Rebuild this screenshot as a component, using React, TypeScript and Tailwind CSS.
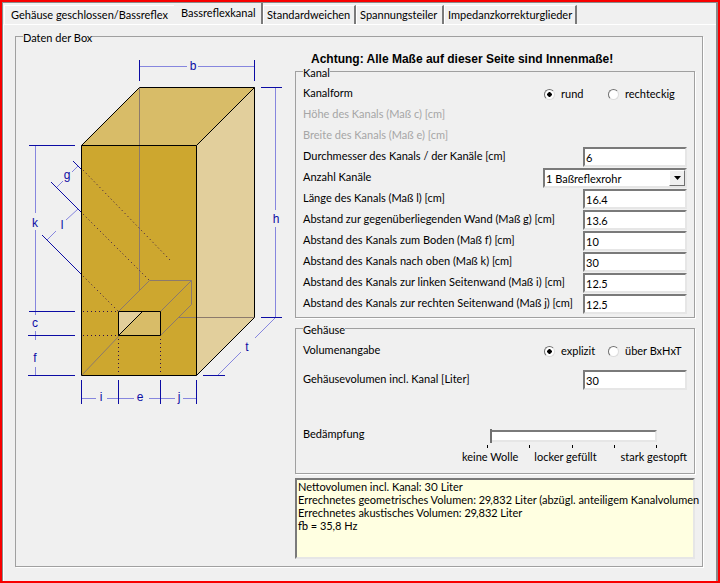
import type { ReactNode } from "react";

const sunken =
  "border-2 border-t-[#7a7a7a] border-l-[#7a7a7a] border-r-[#e6e6e6] border-b-[#e6e6e6]";

function GroupBox({ title, className, children }: { title: string; className: string; children: ReactNode }) {
  return (
    <fieldset
      className={`min-w-0 border border-[#a0a0a0] px-[7px] shadow-[1px_1px_0_#ffffff] ${className}`}
    >
      <legend className="h-[13px] pt-px leading-[14px]">{title}</legend>
      {children}
    </fieldset>
  );
}

function Radio({ name, label, checked }: { name: string; label: string; checked?: boolean }) {
  return (
    <label className="flex h-[20px] w-[64px] shrink-0 items-center gap-[6px] whitespace-nowrap">
      <input
        type="radio"
        name={name}
        defaultChecked={checked}
        className="size-[11px] shrink-0 appearance-none rounded-full border border-t-[#707070] border-l-[#707070] border-r-[#dcdcdc] border-b-[#dcdcdc] bg-white checked:bg-[radial-gradient(circle,#000_2px,#fff_2.5px)]"
      />
      {label}
    </label>
  );
}

function Field({ id, label, value }: { id: string; label: string; value: string }) {
  return (
    <div className="flex h-[21px] justify-between">
      <label htmlFor={id} className="h-[18px] whitespace-nowrap leading-[18px]">
        {label}
      </label>
      <input
        id={id}
        defaultValue={value}
        className={`h-[20px] w-[104px] shrink-0 bg-white px-px ${sunken}`}
      />
    </div>
  );
}

function RadioRow({ title, name, options }: { title: string; name: string; options: string[] }) {
  return (
    <div role="radiogroup" aria-label={title} className="flex h-[21px] justify-between leading-[18px]">
      <span>{title}</span>
      <div className="flex w-[143px] shrink-0">
        <Radio name={name} label={options[0]} checked />
        <Radio name={name} label={options[1]} />
      </div>
    </div>
  );
}

const thin = "M139 66.5H187M198 66.5H254M275.5 88V210M275.5 227V317M35.5 146V213M35.5 230V315M35.5 331V340M35.5 367V375M57 187L63 181M72 172L78 166M47 240L56 231M66 220L78 209M82 398.5H96M107 398.5H134M149 398.5H175M183 398.5H196M218 375L241 352M255 338L275 318";
const ticks = "M139.5 60V81M254.5 60V81M261 87.5H282M261 317.5H282M29 145.5H75M29 311.5H75M28 335.5H75M28 375.5H75M73 161L81 169M51 182L81 212M42 235L81 274M81.5 380V404M118.5 380V404M160.5 380V404M196.5 380V404M203 375.5H225";
const hidden = "M139.5 88V290M82 375L119 336M178 317.5H254M118.5 311.5L149.5 280.5H191.5V304.5L160.5 335.5M160.5 311.5L191.5 280.5";
const marks: [string, number, number][] = [
  ["b", 193, 70],
  ["h", 276, 223],
  ["g", 67, 179],
  ["k", 35, 227],
  ["l", 62, 229],
  ["c", 35, 327],
  ["f", 35, 362],
  ["i", 101, 401],
  ["e", 140, 401],
  ["j", 179, 401],
  ["t", 247, 351],
];

function BoxDrawing() {
  return (
    <svg viewBox="23 50 267 360" className="h-[360px] w-[267px]" role="img" aria-label="Daten der Box">
      <path d="M81 145.5L139.5 87.5H254.5L196.5 145.5Z" fill="#d8bc68" />
      <path d="M196.5 145.5L254.5 87.5V317.5L196.5 375.5Z" fill="#e2cf9c" />
      <path d="M81.5 145.5H196.5V375.5H81.5Z" fill="#cda72f" />
      <path d={hidden} fill="none" stroke="#8c7a6c" />
      <path d="M118.5 311.5H160.5V335.5H118.5Z" fill="#d8bc68" />
      <path d="M118.5 311.5H142.5L118.5 335.5Z" fill="#e2cf9c" />
      <g fill="none" stroke="#000">
        <path d="M118.5 311.5H160.5V335.5H118.5ZM118.5 335.5L142.5 311.5" />
        <path d="M81.5 145.5H196.5V375.5H81.5ZM81.5 145.5L139.5 87.5H254.5V317.5L196.5 375.5M196.5 145.5L254.5 87.5" />
      </g>
      <path
        d="M83 170L170 260M83 214L149 280M83 276L118 311M83 311.5H118M83 335.5H118M118.5 339V375M160.5 339V375"
        fill="none"
        stroke="#30104a"
        strokeDasharray="1 3"
      />
      <path d={thin} fill="none" stroke="#8686de" />
      <path d={ticks} fill="none" stroke="#0c0ca4" />
      <g
        fill="#0c0ca4"
        fontSize="12"
        textAnchor="middle"
        className="font-['Liberation_Sans',Arial,sans-serif]"
      >
        {marks.map(([t, x, y]) => (
          <text key={t} x={x} y={y}>
            {t}
          </text>
        ))}
      </g>
    </svg>
  );
}

const idleTab =
  "h-[19px] self-end whitespace-nowrap border-t border-l border-t-white border-l-white pb-px text-left";

export default function App() {
  return (
    <div className="flex min-h-screen flex-col border-2 border-[#f80000] bg-[#f0f0f0] font-[Lato,'Liberation_Sans',Arial,sans-serif] text-[11px] leading-[13px] text-black">
      <div className="flex grow flex-col border-t border-r-2 border-l border-[#8a8a8a]">
        <div role="tablist" className="flex h-[21px] items-end pl-px">
          <button role="tab" className={`${idleTab} min-w-[170px] px-[6px]`}>Gehäuse geschlossen/Bassreflex</button>
          <button
            role="tab"
            aria-selected="true"
            className="h-[21px] min-w-[89px] whitespace-nowrap border-r-2 border-[#7a7a7a] pl-[7px] pb-[3px] text-left"
          >
            Bassreflexkanal
          </button>
          <button role="tab" className={`${idleTab} min-w-[93px] border-r-2 border-r-[#7a7a7a] px-[3px]`}>Standardweichen</button>
          <button role="tab" className={`${idleTab} min-w-[88px] border-r-2 border-r-[#7a7a7a] px-[3px]`}>Spannungsteiler</button>
          <button role="tab" className={`${idleTab} min-w-[130px] border-r-2 border-r-[#7a7a7a] px-[3px]`}>Impedanzkorrekturglieder</button>
        </div>
        <main className="flex grow flex-col border-t border-l border-white pt-[5px] pr-[13px] pb-[14px] pl-[11px]">
          <GroupBox title="Daten der Box" className="grow">
            <div className="flex pt-[7px]">
              <div className="w-[272px] shrink-0">
                <BoxDrawing />
              </div>
              <div className="flex min-w-0 flex-1 flex-col">
                <h1 className="h-[15px] whitespace-nowrap pt-[2px] pl-4 font-['Liberation_Sans',Arial,sans-serif] text-[12px] leading-[15px] font-bold">
                  Achtung: Alle Maße auf dieser Seite sind Innenmaße!
                </h1>
                <GroupBox title="Kanal" className="pb-[2px]">
                  <div className="pt-[6px]">
                    <RadioRow title="Kanalform" name="kanalform" options={["rund", "rechteckig"]} />
                    <p className="h-[21px] leading-[18px] text-[#a6a6a6]">Höhe des Kanals (Maß c) [cm]</p>
                    <p className="h-[21px] leading-[18px] text-[#a6a6a6]">Breite des Kanals (Maß e) [cm]</p>
                    <Field id="durchmesser" label="Durchmesser des Kanals / der Kanäle [cm]" value="6" />
                    <div className="flex h-[21px] justify-between">
                      <label htmlFor="anzahl" className="leading-[18px]">Anzahl Kanäle</label>
                      <div className={`flex h-[20px] w-[144px] shrink-0 bg-white ${sunken}`}>
                        <select id="anzahl" className="min-w-0 grow appearance-none pl-px">
                          <option>1 Baßreflexrohr</option>
                        </select>
                        <span className="pointer-events-none flex w-[16px] items-center justify-center border border-t-white border-l-white border-r-[#707070] border-b-[#707070] bg-[#f0f0f0]">
                          <svg viewBox="0 0 7 4" className="h-1 w-[7px]">
                            <path d="M0 0H7L3.5 4Z" />
                          </svg>
                        </span>
                      </div>
                    </div>
                    <Field id="laenge" label="Länge des Kanals (Maß l) [cm]" value="16.4" />
                    <Field id="wand" label="Abstand zur gegenüberliegenden Wand (Maß g) [cm]" value="13.6" />
                    <Field id="boden" label="Abstand des Kanals zum Boden (Maß f) [cm]" value="10" />
                    <Field id="oben" label="Abstand des Kanals nach oben (Maß k) [cm]" value="30" />
                    <Field id="links" label="Abstand des Kanals zur linken Seitenwand (Maß i) [cm]" value="12.5" />
                    <Field id="rechts" label="Abstand des Kanals zur rechten Seitenwand (Maß j) [cm]" value="12.5" />
                  </div>
                </GroupBox>
                <GroupBox title="Gehäuse" className="mt-[4px] pb-[10px]">
                  <div className="flex flex-col gap-[8px] pt-[6px]">
                    <RadioRow title="Volumenangabe" name="volumen" options={["explizit", "über BxHxT"]} />
                    <Field id="liter" label="Gehäusevolumen incl. Kanal [Liter]" value="30" />
                  </div>
                  <div className="mt-[36px] flex justify-between">
                    <label htmlFor="daempfung" className="leading-[13px]">Bedämpfung</label>
                    <div className="w-[225px] shrink-0 pt-[3px]">
                      <div className="pr-[30px] pl-[25px]">
                        <input
                          id="daempfung"
                          type="range"
                          min="0"
                          max="4"
                          defaultValue="0"
                          className={`block h-[12px] w-full appearance-none bg-white ${sunken} [&::-webkit-slider-thumb]:-ml-[3px] [&::-webkit-slider-thumb]:h-[14px] [&::-webkit-slider-thumb]:w-[6px] [&::-webkit-slider-thumb]:appearance-none [&::-webkit-slider-thumb]:border-0 [&::-webkit-slider-thumb]:border-r-2 [&::-webkit-slider-thumb]:border-solid [&::-webkit-slider-thumb]:border-[#707070] [&::-webkit-slider-thumb]:bg-[#f0f0f0]`}
                        />
                        <div className="mt-[3px] flex justify-between">
                          {[0, 1, 2, 3, 4].map((n) => (
                            <span key={n} className="h-[3px] w-px bg-black" />
                          ))}
                        </div>
                      </div>
                      <div className="mt-[2px] flex whitespace-nowrap">
                        <span>keine Wolle</span>
                        <span className="ml-4">locker gefüllt</span>
                        <span className="ml-auto">stark gestopft</span>
                      </div>
                    </div>
                  </div>
                </GroupBox>
                <output className={`mt-[4px] block h-[81px] bg-[#ffffe1] pl-px whitespace-nowrap proportional-nums ${sunken}`}>
                  <p>Nettovolumen incl. Kanal: 30 Liter</p>
                  <p>Errechnetes geometrisches Volumen: 29,832 Liter (abzügl. anteiligem Kanalvolumen</p>
                  <p>Errechnetes akustisches Volumen: 29,832 Liter</p>
                  <p>fb = 35,8 Hz</p>
                </output>
              </div>
            </div>
          </GroupBox>
        </main>
      </div>
    </div>
  );
}
